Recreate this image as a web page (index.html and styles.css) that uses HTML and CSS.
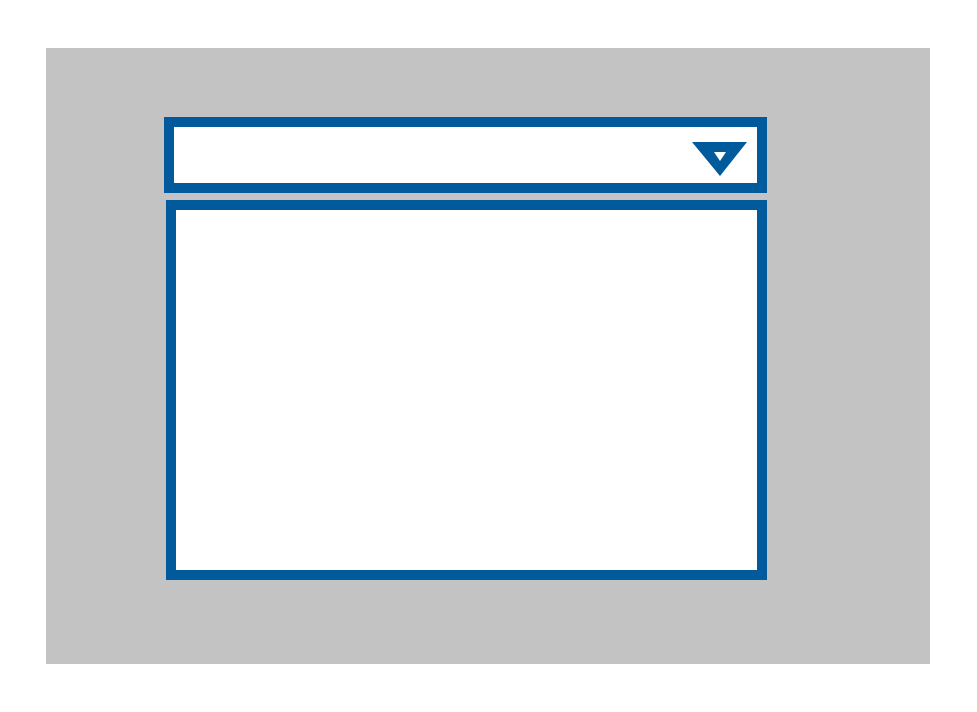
FILE: index.html
```html
<!DOCTYPE html>
<html lang="en">
<head>
  <meta charset="UTF-8" />
  <title>Dropdown</title>
  <link rel="stylesheet" href="styles.css">
</head>
<body>
  <div class="canvas">
    <div class="select-box">
      <svg class="select-arrow" width="55" height="34" viewBox="0 0 55 34" aria-hidden="true">
        <path fill-rule="evenodd" d="M0 0H55L28 34ZM22 10H34L28 19Z" />
      </svg>
    </div>
    <div class="list-box"></div>
  </div>
</body>
</html>
```

FILE: styles.css
```css
/* Base */
body {
  margin: 0;
  background: #ffffff;
  font-family: 'Liberation Sans', sans-serif;
}

/* Gray drawing area */
.canvas {
  width: 884px;
  height: 616px;
  margin: 48px 0 0 46px;
  background: #c3c3c3;
  box-sizing: border-box;
  padding: 69px 0 0 118px;
  display: flex;
  flex-direction: column;
  gap: 7px;
}

/* Closed select field */
.select-box {
  width: 603px;
  height: 76px;
  box-sizing: border-box;
  border: 10px solid #005a9c;
  background: #ffffff;
  display: flex;
  justify-content: flex-end;
  align-items: flex-start;
  padding: 15px 10px 0 0;
}
.select-arrow {
  display: block;
  fill: #005a9c;
}

/* Dropdown list */
.list-box {
  width: 601px;
  height: 380px;
  margin-left: 2px;
  box-sizing: border-box;
  border: 10px solid #005a9c;
  background: #ffffff;
}
```
